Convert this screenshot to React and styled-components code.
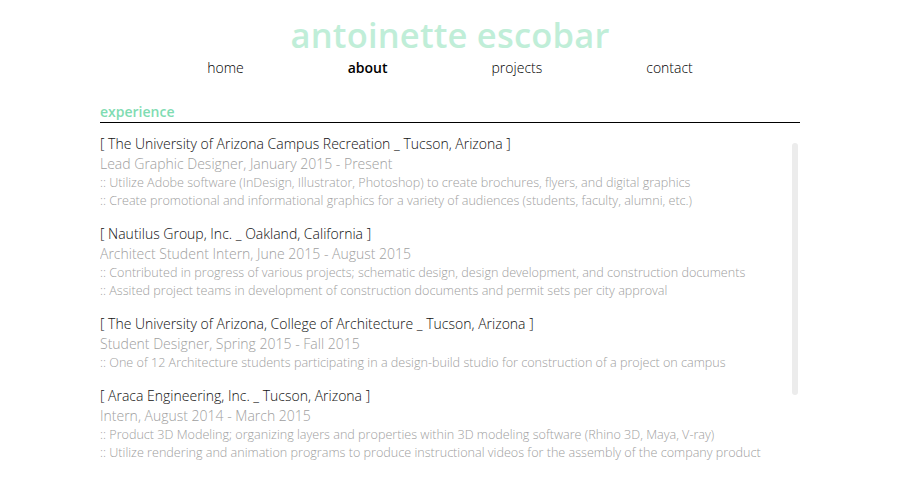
import React from 'react'
import styled, { createGlobalStyle } from 'styled-components'

const GlobalStyle = createGlobalStyle`
    html, body {
        margin: 0;
        padding: 0;
        background: #fff;
        overflow: hidden;
    }
    body {
        font-family: "Open Sans", "Liberation Sans", sans-serif;
        font-weight: 300;
        color: #000;
    }
`

const Page = styled.div`
    width: 900px;
    height: 480px;
    display: flex;
    flex-direction: column;
    align-items: center;
`

const Title = styled.h1`
    margin: 13px 0 0;
    font-size: 34.5px;
    line-height: 44px;
    font-weight: 600;
    color: #c0eed8;
    letter-spacing: 0.2px;
`

const Nav = styled.ul`
    list-style: none;
    display: flex;
    gap: 104px;
    margin: 1px 0 0;
    padding: 0;
`

const NavItem = styled.li`
    font-size: 14px;
    line-height: 20px;
    font-weight: ${props => props.active ? 600 : 300};
    color: #000;
    cursor: pointer;
`

const Section = styled.section`
    position: relative;
    width: 700px;
    margin-top: 25px;
    display: flex;
    flex-direction: column;
    min-height: 0;
    flex: 1;
`

const SectionHead = styled.h2`
    margin: 0;
    font-size: 14px;
    line-height: 18px;
    font-weight: 600;
    color: #7fdcb2;
    padding-bottom: 1px;
    border-bottom: 1px solid #000;
`

const Scroller = styled.div`
    flex: 1;
    overflow-y: auto;
    margin-top: 12px;
    scrollbar-width: none;

    &::-webkit-scrollbar {
        display: none;
    }
`

// the page's own thin scrollbar, drawn over the list's right edge
const ScrollThumb = styled.div`
    position: absolute;
    right: 2px;
    top: 40px;
    width: 6px;
    height: 252px;
    border-radius: 3px;
    background: #ececec;
`

const Job = styled.div`
    margin-bottom: 15px;
`

const Place = styled.div`
    font-size: 14px;
    line-height: 18px;
    color: #111;
`

const Role = styled.div`
    font-size: 14px;
    line-height: 20px;
    margin-top: 1px;
    color: #a0a0a0;
`

const Duty = styled.div`
    font-size: 12.6px;
    line-height: 18px;
    color: #a0a0a0;
`

const jobs = [
    {
        place: '[ The University of Arizona Campus Recreation _ Tucson, Arizona ]',
        role: 'Lead Graphic Designer, January 2015 - Present',
        duties: [
            ':: Utilize Adobe software (InDesign, Illustrator, Photoshop) to create brochures, flyers, and digital graphics',
            ':: Create promotional and informational graphics for a variety of audiences (students, faculty, alumni, etc.)',
        ],
    },
    {
        place: '[ Nautilus Group, Inc. _ Oakland, California ]',
        role: 'Architect Student Intern, June 2015 - August 2015',
        duties: [
            ':: Contributed in progress of various projects; schematic design, design development, and construction documents',
            ':: Assited project teams in development of construction documents and permit sets per city approval',
        ],
    },
    {
        place: '[ The University of Arizona, College of Architecture _ Tucson, Arizona ]',
        role: 'Student Designer, Spring 2015 - Fall 2015',
        duties: [
            ':: One of 12 Architecture students participating in a design-build studio for construction of a project on campus',
        ],
    },
    {
        place: '[ Araca Engineering, Inc. _ Tucson, Arizona ]',
        role: 'Intern, August 2014 - March 2015',
        duties: [
            ':: Product 3D Modeling; organizing layers and properties within 3D modeling software (Rhino 3D, Maya, V-ray)',
            ':: Utilize rendering and animation programs to produce instructional videos for the assembly of the company product',
        ],
    },
]

const navLinks = ['home', 'about', 'projects', 'contact']

const App = () => {
    return (
        <Page>
            <GlobalStyle />
            <Title>antoinette escobar</Title>
            <Nav>
                {navLinks.map(link => (
                    <NavItem key={link} active={link === 'about'}>{link}</NavItem>
                ))}
            </Nav>
            <Section>
                <SectionHead>experience</SectionHead>
                <Scroller>
                    {jobs.map(job => (
                        <Job key={job.place}>
                            <Place>{job.place}</Place>
                            <Role>{job.role}</Role>
                            {job.duties.map(duty => (
                                <Duty key={duty}>{duty}</Duty>
                            ))}
                        </Job>
                    ))}
                </Scroller>
                <ScrollThumb />
            </Section>
        </Page>
    )
}

export default App
